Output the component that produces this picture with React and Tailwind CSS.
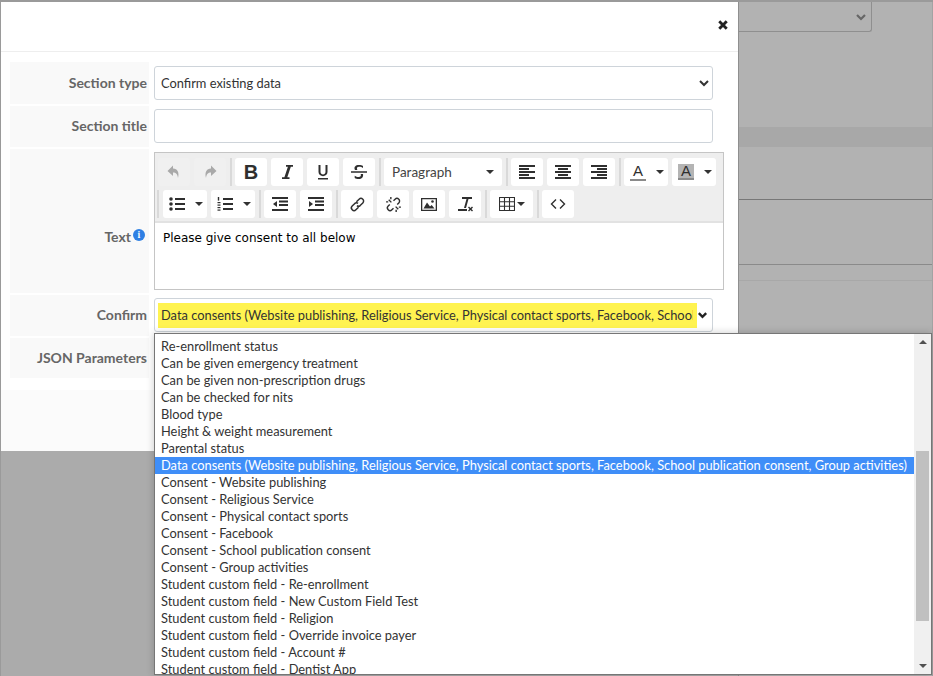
import { useState } from "react";

const options = [
    "Re-enrollment status",
    "Can be given emergency treatment",
    "Can be given non-prescription drugs",
    "Can be checked for nits",
    "Blood type",
    "Height & weight measurement",
    "Parental status",
    "Data consents (Website publishing, Religious Service, Physical contact sports, Facebook, School publication consent, Group activities)",
    "Consent - Website publishing",
    "Consent - Religious Service",
    "Consent - Physical contact sports",
    "Consent - Facebook",
    "Consent - School publication consent",
    "Consent - Group activities",
    "Student custom field - Re-enrollment",
    "Student custom field - New Custom Field Test",
    "Student custom field - Religion",
    "Student custom field - Override invoice payer",
    "Student custom field - Account #",
    "Student custom field - Dentist App",
];

const SELECTED = 7;

function Icon({ children, className = "h-4 w-4", vb = "0 0 16 16" }) {
    return (
        <svg viewBox={vb} className={className} fill="currentColor">
            {children}
        </svg>
    );
}

function Btn({ children, off, className = "w-8" }) {
    return (
        <div
            className={`flex h-7 shrink-0 items-center justify-center rounded-[3px] ${className} ${
                off ? "bg-[#f0f0f0] text-[#a9a9a9]" : "bg-white text-[#2f2f2f]"
            }`}
        >
            {children}
        </div>
    );
}

function Caret() {
    return <span className="h-0 w-0 border-x-4 border-t-4 border-x-transparent border-t-[#333]" />;
}

function Split({ children }) {
    return (
        <div className="flex">
            <Btn className="w-7 rounded-r-none">{children}</Btn>
            <Btn className="w-4 rounded-l-none">
                <Caret />
            </Btn>
        </div>
    );
}

function Sep() {
    return <div className="-mr-[1px] h-7 w-[2px] shrink-0 bg-[#d9d9d9]" />;
}

function Lines({ rows }) {
    return (
        <Icon>
            {rows.map(([x, y, w], i) => (
                <rect key={i} x={x} y={y} width={w} height="2" />
            ))}
        </Icon>
    );
}

function Row({ label, children, className = "h-[42px]", info, labelClass = "" }) {
    return (
        <div className={`flex ${className}`}>
            <div
                className={`flex w-[139px] shrink-0 items-center justify-end gap-[2px] bg-[#f9f9f9] text-right text-sm font-bold text-[#666] ${
                    info ? "pr-[4px]" : "pr-[2px]"
                } ${labelClass}`}
            >
                {label}
                {info && (
                    <span className="mb-[4px] flex h-3 w-3 items-center justify-center rounded-full bg-[#2f80e4] font-serif text-[9px] font-bold leading-none text-white">
                        i
                    </span>
                )}
            </div>
            <div className="min-w-0 flex-1 pl-[5px]">{children}</div>
        </div>
    );
}

function Toolbar() {
    return (
        <div className="border-b-2 border-[#e2e2e2] bg-[#eeeeee] pb-[3px] pl-[3px] pt-[5px]">
            <div className="flex h-7 items-center gap-1">
                <Btn off>
                    <Icon>
                        <path d="M7 1.500 1.500 7 7 12V8.500c3 0 4.500 1.500 5 5.500 1.500-5.500-.5-9.500-5-9.500z" />
                    </Icon>
                </Btn>
                <Btn off>
                    <Icon>
                        <path d="M9 1.500 14.500 7 9 12V8.500c-3 0-4.500 1.500-5 5.500-1.500-5.500.5-9.500 5-9.500z" />
                    </Icon>
                </Btn>
                <Sep />
                <Btn>
                    <span className="font-['Liberation_Sans',sans-serif] text-[20px] font-bold leading-none">B</span>
                </Btn>
                <Btn>
                    <Icon>
                        <path d="M7 1h7v1.800h-2.200L8.300 13.200h2.200V15H3v-1.800h2.400L8.900 2.800H7z" />
                    </Icon>
                </Btn>
                <Btn>
                    <Icon>
                        <path d="M3.500 1h2v7c0 3.300 5 3.300 5 0V1h2v7c0 5.500-9 5.500-9 0zM3 14h10v1.600H3z" />
                    </Icon>
                </Btn>
                <Btn>
                    <Icon>
                        <path d="M0 7.300h16v1.400H0zM4 6c-1.500-3 .5-5 4-5 1.700 0 3 .3 4 1v2c-1-.8-2.300-1.200-4-1.200-1.800 0-2.600 1.200-1.700 3.200zM12 10c.6 3-1.200 5-4.300 5-1.700 0-3-.4-4-1v-2.200c1.200.8 2.500 1.300 4 1.300 1.800 0 2.600-1.300 2-3.100z" />
                    </Icon>
                </Btn>
                <Sep />
                <div className="flex h-7 w-[118px] shrink-0 items-center justify-between rounded-[3px] bg-white px-2 text-[13.500px] text-[#444]">
                    Paragraph
                    <Caret />
                </div>
                <Sep />
                <Btn>
                    <Lines rows={[[0, 1, 16], [0, 4, 10], [0, 7, 16], [0, 10, 10], [0, 13, 16]]} />
                </Btn>
                <Btn>
                    <Lines rows={[[0, 1, 16], [3, 4, 10], [0, 7, 16], [3, 10, 10], [0, 13, 16]]} />
                </Btn>
                <Btn>
                    <Lines rows={[[0, 1, 16], [6, 4, 10], [0, 7, 16], [6, 10, 10], [0, 13, 16]]} />
                </Btn>
                <Sep />
                <Split>
                    <span className="flex flex-col items-center">
                        <span className="font-['Liberation_Sans',sans-serif] text-[15px] leading-[14px]">A</span>
                        <span className="mt-[1px] h-[2px] w-4 bg-[#8a8a8a]" />
                    </span>
                </Split>
                <Split>
                    <span className="flex flex-col items-center">
                        <span className="w-4 bg-[#b4b4b4] text-center font-['Liberation_Sans',sans-serif] text-[15px] leading-[14px]">A</span>
                        <span className="h-[2px] w-4 bg-[#8a8a8a]" />
                    </span>
                </Split>
            </div>
            <div className="mt-1 -ml-[1px] flex h-7 items-center gap-1">
                <Sep />
                <div className="ml-[1px] flex items-center gap-1">
                    <Split>
                        <Icon>
                            <circle cx="2" cy="3" r="1.800" />
                            <circle cx="2" cy="8" r="1.800" />
                            <circle cx="2" cy="13" r="1.800" />
                            <rect x="6" y="2" width="10" height="2" />
                            <rect x="6" y="7" width="10" height="2" />
                            <rect x="6" y="12" width="10" height="2" />
                        </Icon>
                    </Split>
                    <Split>
                        <Icon>
                            <rect x="0.800" y="1" width="1.400" height="3.600" />
                            <rect x="0.500" y="6" width="3" height="1.200" />
                            <rect x="0.500" y="8.500" width="3" height="1.200" />
                            <rect x="0.500" y="11" width="3" height="1.200" />
                            <rect x="0.500" y="13.500" width="3" height="1.200" />
                            <rect x="6" y="2" width="10" height="2" />
                            <rect x="6" y="7" width="10" height="2" />
                            <rect x="6" y="12" width="10" height="2" />
                        </Icon>
                    </Split>
                    <Sep />
                    <Btn>
                        <Icon>
                            <rect x="0" y="1" width="16" height="2" />
                            <rect x="7" y="4.500" width="9" height="2" />
                            <rect x="7" y="8" width="9" height="2" />
                            <rect x="0" y="13" width="16" height="2" />
                            <path d="M5 5v6L1 8z" />
                        </Icon>
                    </Btn>
                    <Btn>
                        <Icon>
                            <rect x="0" y="1" width="16" height="2" />
                            <rect x="7" y="4.500" width="9" height="2" />
                            <rect x="7" y="8" width="9" height="2" />
                            <rect x="0" y="13" width="16" height="2" />
                            <path d="M1 5v6l4-3z" />
                        </Icon>
                    </Btn>
                    <Sep />
                    <Btn>
                        <svg viewBox="0 0 16 16" className="h-[17px] w-[17px]" fill="none" stroke="currentColor" strokeWidth="1.400">
                            <path d="M7 5.500 9.500 3a2.300 2.300 0 0 1 3.500 3.500L10.500 9a2.300 2.300 0 0 1-3 0M9 10.500 6.500 13A2.300 2.300 0 0 1 3 9.500L5.500 7a2.300 2.300 0 0 1 3 0" />
                        </svg>
                    </Btn>
                    <Btn>
                        <svg viewBox="0 0 16 16" className="h-[17px] w-[17px]" fill="none" stroke="currentColor" strokeWidth="1.300">
                            <path d="M8 4.500 9.500 3a2.300 2.300 0 0 1 3.500 3.500L11.500 8M8 11.500 6.500 13A2.300 2.300 0 0 1 3 9.500L4.500 8M6 6 3.500 3.500M10 10l2.500 2.500M5.500 1v2M1 5.500h2M10.500 13v2M13 10.500h2" />
                        </svg>
                    </Btn>
                    <Btn>
                        <Icon>
                            <path d="M0 2h16v13H0zm1.300 1.300v10.400h13.400V3.300z" />
                            <path d="M2.500 12.500 6 6.500l3 4 1.700-1.500 2.800 3.500z" />
                            <circle cx="11.500" cy="5.500" r="1.300" />
                        </Icon>
                    </Btn>
                    <Btn>
                        <Icon>
                            <path d="M5 1h10v2h-3.500L9 12H7l2.500-9H5zM1 13h9v2H1zM11 11.500l1-1 1.500 1.500 1.500-1.500 1 1-1.500 1.500 1.500 1.500-1 1-1.500-1.500-1.500 1.500-1-1 1.500-1.500z" />
                        </Icon>
                    </Btn>
                    <Sep />
                    <Btn className="w-[43px] gap-[2px]">
                        <svg viewBox="0 0 16 16" className="h-4 w-4" fill="none" stroke="currentColor" strokeWidth="1.100">
                            <path d="M.5 1.500h15v13H.5zM.5 5.800h15M.5 10.200h15M5.500 1.500v13M10.500 1.500v13" />
                        </svg>
                        <Caret />
                    </Btn>
                    <Sep />
                    <Btn>
                        <svg viewBox="0 0 16 16" className="h-4 w-4" fill="none" stroke="currentColor" strokeWidth="1.400">
                            <path d="M6 3.500 1.500 8 6 12.500M10 3.500 14.500 8 10 12.500" />
                        </svg>
                    </Btn>
                </div>
            </div>
        </div>
    );
}

export default function App() {
    const [title, setTitle] = useState("");

    return (
        <div className="relative h-[676px] w-[933px] overflow-hidden border-t-2 border-l border-[#9a9a9a] bg-[#b2b2b2] font-['Lato',sans-serif] text-[12.850px] text-[#333]">
            <div className="flex h-full">
                <div className="flex w-[737px] shrink-0 flex-col">
                    <div className="flex h-[449px] shrink-0 flex-col bg-white">
                        <div className="flex h-[50px] shrink-0 items-center justify-end border-b border-[#eeeeee] pr-[10px]">
                            <svg viewBox="0 0 12 12" className="mb-[4px] h-[10px] w-[10px] text-[#222]" fill="none" stroke="currentColor" strokeWidth="3.400">
                                <path d="M1.500 1.500l9 9M10.500 1.500l-9 9" />
                            </svg>
                        </div>
                        <div className="flex flex-col gap-[2px] pb-[12px] pl-[9px] pr-[25px] pt-[10px]">
                            <Row label="Section type">
                                <div className="flex h-full items-center">
                                    <select className="h-[34px] w-full rounded-[3px] border border-[#ced4da] bg-white px-[2px] text-[12.850px] text-[#333]">
                                        <option>Confirm existing data</option>
                                    </select>
                                </div>
                            </Row>
                            <Row label="Section title" className="h-[41px]" labelClass="pb-[1px]">
                                <input
                                    value={title}
                                    onChange={(e) => setTitle(e.target.value)}
                                    className="mt-[3px] block h-[34px] w-full rounded-[3px] border border-[#ced4da] bg-white px-2 text-[13px] outline-none"
                                />
                            </Row>
                            <Row label="Text" info className="h-[144px]" labelClass="pt-[32px]">
                                <div className="mt-[3px] w-[570px] border border-[#c5c5c5] bg-white">
                                    <Toolbar />
                                    <div className="h-[66px] px-2 pt-2 font-['DejaVu_Sans',sans-serif] text-xs leading-[14px] text-black">
                                        Please give consent to all below
                                    </div>
                                </div>
                            </Row>
                            <Row label="Confirm" className="h-[41px]" labelClass="pb-[1px]">
                                <div className="mt-[3px] flex h-[34px] items-center rounded-[3px] border border-[#ced4da] bg-white pl-[3px] pr-[4px]">
                                    <div className="h-[25px] w-[539px] shrink-0 bg-[#fff350] px-[3px] leading-[24px]">
                                        <div className="h-full w-[532px] overflow-hidden whitespace-nowrap">{options[SELECTED]}</div>
                                    </div>
                                    <svg viewBox="0 0 12 12" className="h-3 w-3 text-[#222]" fill="none" stroke="currentColor" strokeWidth="2.600">
                                        <path d="M2 4l4 4 4-4" />
                                    </svg>
                                </div>
                            </Row>
                            <Row label="JSON Parameters" className="h-[40px]">
                                <div />
                            </Row>
                        </div>
                        <div className="flex-1 bg-[#fbfbfb]" />
                    </div>
                    <div className="flex-1 bg-[#ababab]" />
                </div>

                {/* dimmed page behind the dialog */}
                <div className="min-w-0 flex-1 border-l border-r border-l-[#8f8f8f] border-r-[#a3a3a3]">
                    <div className="flex h-[30px] w-[133px] items-center justify-end rounded-br-[3px] border-b border-r border-[#8f8f8f] pr-[4px]">
                        <svg viewBox="0 0 12 12" className="h-3 w-3 text-[#666]" fill="none" stroke="currentColor" strokeWidth="2.200">
                            <path d="M2 4l4 4 4-4" />
                        </svg>
                    </div>
                    <div className="h-[95px]" />
                    <div className="h-[20px] bg-[#a8a8a8]" />
                    <div className="h-[52px]" />
                    <div className="h-[1px] bg-[#777]" />
                    <div className="h-[64px]" />
                    <div className="h-[1px] bg-[#8a8a8a]" />
                    <div className="h-[15px]" />
                    <div className="h-[1px] bg-[#a8a8a8]" />
                </div>
            </div>

            {/* open select list */}
            <div className="absolute left-[153px] top-[331px] flex h-[342px] w-[778px] border border-[#767676] bg-white text-[12.850px] leading-[17px] text-[#333] shadow-[0_0_8px_rgba(0,0,0,0.2)]">
                <div className="min-w-0 flex-1 overflow-hidden pt-[4px]">
                    {options.map((o, i) => (
                        <div
                            key={o}
                            className={`h-[17px] whitespace-nowrap px-[6px] ${i === SELECTED ? "bg-[#3f8ef8] text-white" : ""}`}
                        >
                            {o}
                        </div>
                    ))}
                </div>
                <div className="flex w-[17px] shrink-0 flex-col items-center justify-between bg-[#f0f0f0] py-[6px]">
                    <span className="h-0 w-0 border-x-[4px] border-b-[4px] border-x-transparent border-b-[#505050]" />
                    <span className="h-0 w-0 border-x-[4px] border-t-[4px] border-x-transparent border-t-[#505050]" />
                </div>
                <div className="absolute right-[2px] top-[117px] h-[170px] w-[13px] bg-[#c0c0c0]" />
            </div>
        </div>
    );
}
